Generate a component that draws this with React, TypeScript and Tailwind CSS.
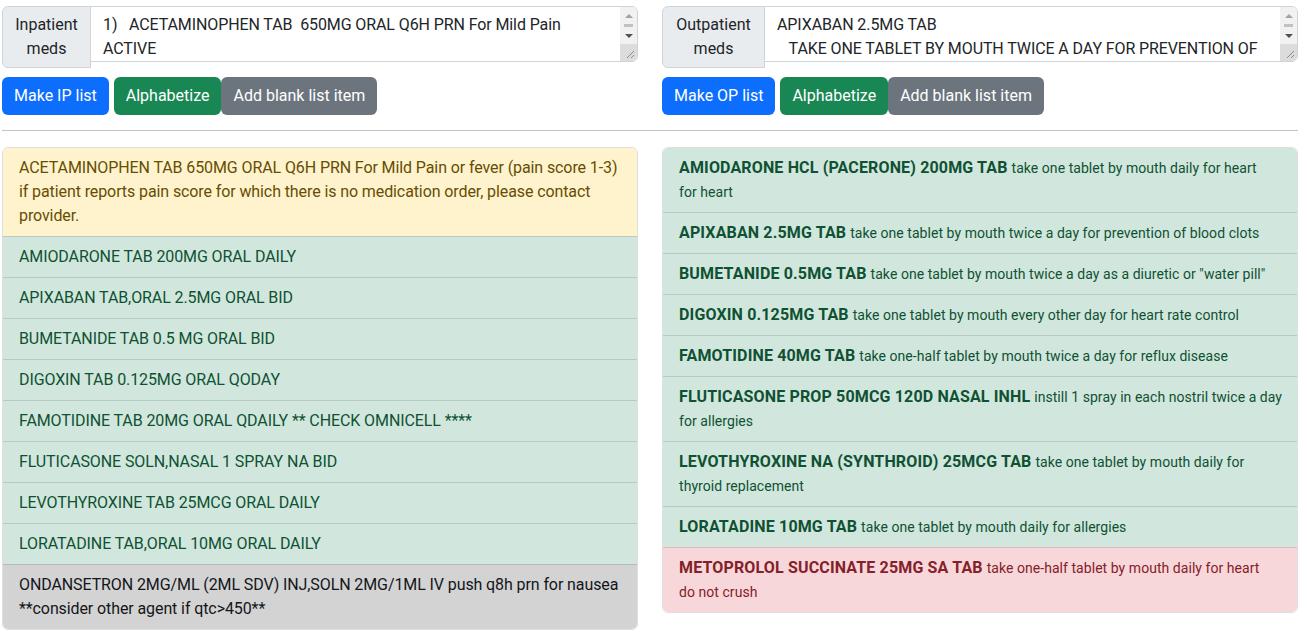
import React from "react";

const FONT = { fontFamily: "Roboto, 'Liberation Sans', sans-serif" };

type Tone = "warning" | "success" | "dark" | "danger";
const toneCls: Record<Tone, string> = {
  warning: "bg-[#fff3cd] text-[#664d03]",
  success: "bg-[#d1e7dd] text-[#0f5132]",
  dark: "bg-[#d3d3d4] text-[#141619]",
  danger: "bg-[#f8d7da] text-[#842029]",
};

const ipItems: { text: string; tone: Tone }[] = [
  {
    text: "ACETAMINOPHEN TAB 650MG ORAL Q6H PRN For Mild Pain or fever (pain score 1-3) if patient reports pain score for which there is no medication order, please contact provider.",
    tone: "warning",
  },
  { text: "AMIODARONE TAB 200MG ORAL DAILY", tone: "success" },
  { text: "APIXABAN TAB,ORAL 2.5MG ORAL BID", tone: "success" },
  { text: "BUMETANIDE TAB 0.5 MG ORAL BID", tone: "success" },
  { text: "DIGOXIN TAB 0.125MG ORAL QODAY", tone: "success" },
  { text: "FAMOTIDINE TAB 20MG ORAL QDAILY ** CHECK OMNICELL ****", tone: "success" },
  { text: "FLUTICASONE SOLN,NASAL 1 SPRAY NA BID", tone: "success" },
  { text: "LEVOTHYROXINE TAB 25MCG ORAL DAILY", tone: "success" },
  { text: "LORATADINE TAB,ORAL 10MG ORAL DAILY", tone: "success" },
  {
    text: "ONDANSETRON 2MG/ML (2ML SDV) INJ,SOLN 2MG/1ML IV push q8h prn for nausea **consider other agent if qtc>450**",
    tone: "dark",
  },
];

const opItems: { name: string; sig: string; tail?: string; tone: Tone }[] = [
  { name: "AMIODARONE HCL (PACERONE) 200MG TAB", sig: "take one tablet by mouth daily for heart", tail: "for heart", tone: "success" },
  { name: "APIXABAN 2.5MG TAB", sig: "take one tablet by mouth twice a day for prevention of blood clots", tone: "success" },
  { name: "BUMETANIDE 0.5MG TAB", sig: "take one tablet by mouth twice a day as a diuretic or \"water pill\"", tone: "success" },
  { name: "DIGOXIN 0.125MG TAB", sig: "take one tablet by mouth every other day for heart rate control", tone: "success" },
  { name: "FAMOTIDINE 40MG TAB", sig: "take one-half tablet by mouth twice a day for reflux disease", tone: "success" },
  { name: "FLUTICASONE PROP 50MCG 120D NASAL INHL", sig: "instill 1 spray in each nostril twice a day", tail: "for allergies", tone: "success" },
  { name: "LEVOTHYROXINE NA (SYNTHROID) 25MCG TAB", sig: "take one tablet by mouth daily for", tail: "thyroid replacement", tone: "success" },
  { name: "LORATADINE 10MG TAB", sig: "take one tablet by mouth daily for allergies", tone: "success" },
  { name: "METOPROLOL SUCCINATE 25MG SA TAB", sig: "take one-half tablet by mouth daily for heart", tail: "do not crush", tone: "danger" },
];

function FakeScrollbar() {
  return (
    <div className="absolute right-px top-px bottom-px w-[17px] flex flex-col bg-[#f1f1f1] rounded-tr-[5px] rounded-br-[5px] overflow-hidden pointer-events-none">
      <div className="h-[17px] flex items-center justify-center">
        <div className="w-0 h-0 border-x-[4px] border-x-transparent border-b-[4px] border-b-[#a3a3a3]" />
      </div>
      <div className="flex justify-center">
        <div className="w-[9px] h-[3px] bg-[#c1c1c1]" />
      </div>
      <div className="h-[17px] flex items-center justify-center">
        <div className="w-0 h-0 border-x-[4px] border-x-transparent border-t-[4px] border-t-[#505050]" />
      </div>
      <div className="flex-1 bg-[#dcdcdc] relative">
        <svg className="absolute right-[2px] bottom-[2px]" width="9" height="9" viewBox="0 0 9 9">
          <path d="M1 8 L8 1 M5 8 L8 5" stroke="#8a8a8a" strokeWidth="1" />
        </svg>
      </div>
    </div>
  );
}

function InputBlock({ label, labelW, value, btn }: { label: string; labelW: string; value: string; btn: string }) {
  return (
    <div className="w-[636px]">
      <div className="flex items-start">
        <div className={`shrink-0 ${labelW} h-[62px] flex items-center justify-center text-center px-3 py-[6px] bg-[#e9ecef] border border-[#ced4da] rounded-l-[6px] text-[16px] leading-[24px] text-[#212529]`}>
          {label}
        </div>
        <div className="relative flex-1 h-[56px] -ml-px">
          <textarea
            readOnly
            value={value}
            className="w-full h-full block pl-3 pr-[20px] py-[6px] border border-[#ced4da] rounded-r-[6px] text-[16px] leading-[24px] tracking-[-0.1px] text-[#212529] bg-white overflow-hidden resize-none outline-none"
            style={FONT}
          />
          <FakeScrollbar />
        </div>
      </div>
      <div className="flex mt-[9px] text-[16px] leading-[24px] text-white">
        <button className="px-3 py-[7px] rounded-[6px] bg-[#0d6efd]">{btn}</button>
        <button className="ml-[5px] px-3 py-[7px] rounded-[6px] bg-[#198754]">Alphabetize</button>
        <button className="px-3 py-[7px] rounded-[6px] bg-[#6c757d]">Add blank list item</button>
      </div>
    </div>
  );
}

export default function App() {
  return (
    <div style={FONT} className="bg-white w-[1307px] h-[636px] overflow-hidden pl-[2px] pt-[6px] text-[#212529]">
      <div className="flex gap-6">
        <InputBlock
          label="Inpatient meds"
          labelW="w-[89px]"
          value={"1)   ACETAMINOPHEN TAB  650MG ORAL Q6H PRN For Mild Pain\nACTIVE\n\n2)   AMIODARONE TAB 200MG ORAL DAILY\nACTIVE"}
          btn="Make IP list"
        />
        <InputBlock
          label="Outpatient meds"
          labelW="w-[103px]"
          value={"APIXABAN 2.5MG TAB\n   TAKE ONE TABLET BY MOUTH TWICE A DAY FOR PREVENTION OF\nBLOOD CLOTS"}
          btn="Make OP list"
        />
      </div>
      <hr className="mt-[15px] mb-[16px] w-[1296px] border-t border-[#c4c4c4]" />
      <div className="flex gap-6 items-start">
        <ul className="w-[636px] border border-[rgba(0,0,0,0.125)] rounded-[6px] overflow-hidden text-[16px] leading-[24px] tracking-[-0.1px]">
          {ipItems.map((it, i) => (
            <li key={i} className={`px-4 py-2 ${i > 0 ? "border-t border-[rgba(0,0,0,0.125)]" : ""} ${toneCls[it.tone]}`}>
              {it.text}
            </li>
          ))}
        </ul>
        <ul className="w-[636px] border border-[rgba(0,0,0,0.125)] rounded-[6px] overflow-hidden text-[16px] leading-[24px]">
          {opItems.map((it, i) => (
            <li key={i} className={`pl-4 pr-[10px] py-2 ${i > 0 ? "border-t border-[rgba(0,0,0,0.125)]" : ""} ${toneCls[it.tone]}`}>
              <b className="font-bold tracking-[0.15px]">{it.name}</b>{" "}
              <small className="text-[14px] tracking-[0.05px]">
                {it.sig}
                {it.tail ? (
                  <>
                    {" "}
                    <span className="whitespace-nowrap">{it.tail}</span>
                  </>
                ) : null}
              </small>
            </li>
          ))}
        </ul>
      </div>
    </div>
  );
}
